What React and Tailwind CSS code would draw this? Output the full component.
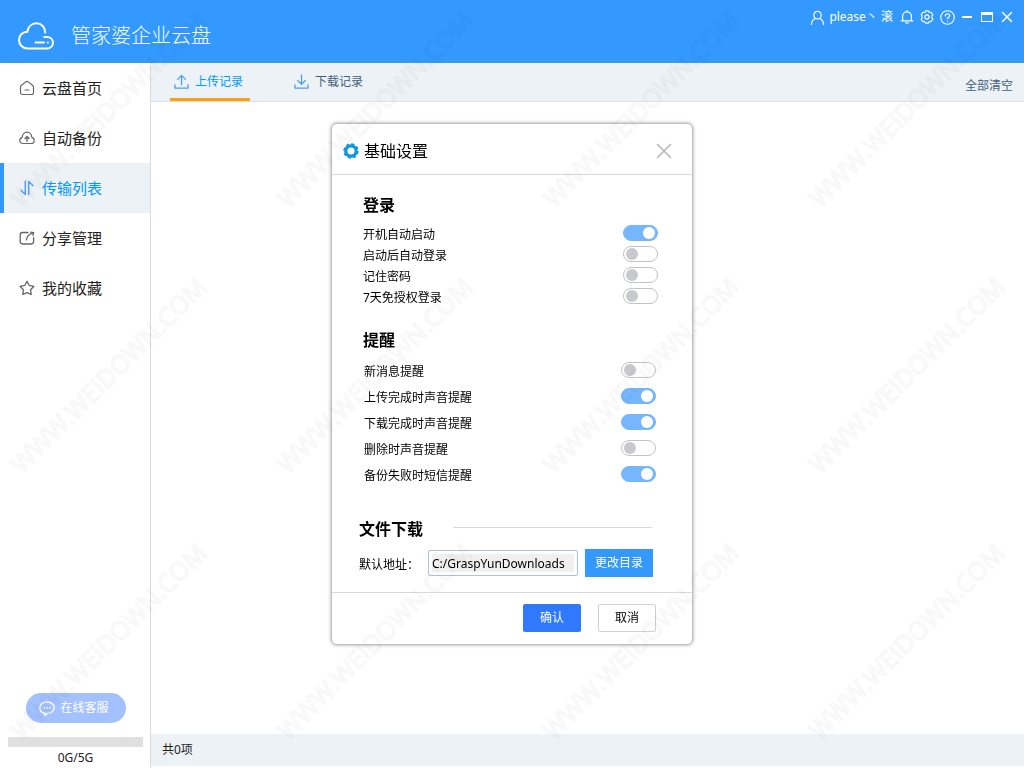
import { useState } from 'react';
import clsx from 'clsx';

const NAV = [
  { key: 'home', label: '云盘首页', icon: HomeIcon },
  { key: 'backup', label: '自动备份', icon: BackupIcon },
  { key: 'transfer', label: '传输列表', icon: TransferIcon },
  { key: 'share', label: '分享管理', icon: ShareIcon },
  { key: 'favorite', label: '我的收藏', icon: StarIcon },
];

const LOGIN_OPTIONS = [
  { key: 'boot', label: '开机自动启动', on: true },
  { key: 'autoLogin', label: '启动后自动登录', on: false },
  { key: 'remember', label: '记住密码', on: false },
  { key: 'sevenDays', label: '7天免授权登录', on: false },
];

const NOTICE_OPTIONS = [
  { key: 'message', label: '新消息提醒', on: false },
  { key: 'upload', label: '上传完成时声音提醒', on: true },
  { key: 'download', label: '下载完成时声音提醒', on: true },
  { key: 'remove', label: '删除时声音提醒', on: false },
  { key: 'backupFail', label: '备份失败时短信提醒', on: true },
];

function Icon({ className, children, box = 16 }) {
  return (
    <svg
      viewBox={`0 0 ${box} ${box}`}
      className={className}
      fill="none"
      stroke="currentColor"
      strokeLinecap="round"
      strokeLinejoin="round"
      aria-hidden="true"
    >
      {children}
    </svg>
  );
}

function HomeIcon({ className }) {
  return (
    <Icon className={className}>
      <path d="M1.5 7.2C1.5 6.4 1.9 5.8 2.5 5.3L6.8 1.9C7.5 1.4 8.5 1.4 9.2 1.9L13.5 5.3C14.1 5.8 14.5 6.4 14.5 7.2V12.4C14.5 13.6 13.6 14.5 12.4 14.5H3.6C2.4 14.5 1.5 13.6 1.5 12.4Z" strokeWidth="1.2" />
      <path d="M6 10H10" strokeWidth="1.2" />
    </Icon>
  );
}

function BackupIcon({ className }) {
  return (
    <Icon className={className}>
      <path d="M4 13.5C2.2 13.5 .8 12.1 .8 10.4C.8 8.9 1.8 7.7 3.2 7.3C3.4 4.6 5.4 2.2 8 2.2C10.6 2.2 12.6 4.6 12.8 7.3C14.2 7.7 15.2 8.9 15.2 10.4C15.2 12.1 13.8 13.5 12 13.5Z" strokeWidth="1.2" />
      <path d="M8 11.2V7M6 8.4L8 6.4L10 8.4" strokeWidth="1.4" />
    </Icon>
  );
}

function TransferIcon({ className }) {
  return (
    <Icon className={className}>
      <path d="M6.3 1.5V14.5L2 10.2M9.7 14.5V1.5L14 5.8" strokeWidth="1.5" />
    </Icon>
  );
}

function ShareIcon({ className }) {
  return (
    <Icon className={className}>
      <path d="M9 2.5H3.6C2.2 2.5 1.2 3.5 1.2 4.9V11.6C1.2 13 2.2 14 3.6 14H12.2C13.6 14 14.6 13 14.6 11.6V7.5" strokeWidth="1.3" />
      <path d="M7.4 9.8C7.8 6.8 10 4.2 14 2.9M11.6 2.2L14.7 2.7L13.9 5.4" strokeWidth="1.3" />
    </Icon>
  );
}

function StarIcon({ className }) {
  return (
    <Icon className={className}>
      <path d="M8 1.3L10.1 5.3L14.9 6.3L11.6 9.7L12.2 14.5L8 12.7L3.8 14.5L4.4 9.7L1.1 6.3L5.9 5.3Z" strokeWidth="1.3" />
    </Icon>
  );
}

function CloudLogo() {
  return (
    <svg viewBox="0 0 36 28" className="h-7 w-9" fill="none" stroke="currentColor" strokeWidth="2" strokeLinecap="round" aria-hidden="true">
      <path d="M27.2 10.4C27.2 5.2 23.4 1.3 18.4 1.3C13.6 1.3 10 4.8 9.3 9.7C4.8 9.7 1 13.3 1 18C1 22.8 4.7 26.5 9.4 26.5H29C32.4 26.5 35 24 35 20.8C35 17.4 32.3 15 28.9 15H26.2" />
      <path d="M17.5 20.5H26M29.8 20.5H29.9" />
    </svg>
  );
}

function Toggle({ id, checked, onChange }) {
  return (
    <input
      id={id}
      type="checkbox"
      role="switch"
      checked={checked}
      onChange={onChange}
      className="flex h-4 w-[35px] shrink-0 cursor-pointer appearance-none items-center rounded-full border border-[#c2c3c6] bg-white px-0.5 before:block before:size-3 before:rounded-full before:bg-[#c8c9cc] checked:justify-end checked:border-[#75b6fd] checked:bg-[#75b6fd] checked:before:bg-white"
    />
  );
}

function OptionRow({ option, rowClass, onToggle }) {
  return (
    <div className={clsx('flex items-center justify-between', rowClass)}>
      <label htmlFor={option.key} className="pt-1 text-xs">
        {option.label}
      </label>
      <Toggle id={option.key} checked={option.on} onChange={() => onToggle(option.key)} />
    </div>
  );
}

function flip(key) {
  return (list) => list.map((o) => (o.key === key ? { ...o, on: !o.on } : o));
}

function SettingsDialog() {
  const [login, setLogin] = useState(LOGIN_OPTIONS);
  const [notice, setNotice] = useState(NOTICE_OPTIONS);
  const [path, setPath] = useState('C:/GraspYunDownloads');

  return (
    <div
      role="dialog"
      aria-label="基础设置"
      className="w-[362px] rounded-md border border-[#c0c0c0] bg-white text-black shadow-[0_0_3px_1px_rgba(0,0,0,0.22)]"
    >
      <div className="flex h-[51px] items-center border-b border-[#d9d9d9] pt-1 pr-5 pl-[11px]">
        <svg viewBox="0 0 16 16" className="size-4 text-[#1296db]" fill="none" stroke="currentColor" aria-hidden="true">
          <circle cx="8" cy="8" r="5.2" strokeWidth="3.2" />
          <circle cx="8" cy="8" r="7" strokeWidth="1.4" strokeDasharray="3.3 2.198" />
        </svg>
        <h2 className="ml-[5px] flex-1 text-base">基础设置</h2>
        <button type="button" aria-label="关闭" className="text-[#b5b5b5]">
          <Icon className="size-4">
            <path d="M1.5 1.5L14.5 14.5M14.5 1.5L1.5 14.5" strokeWidth="1.5" />
          </Icon>
        </button>
      </div>

      <div className="pt-[18px] pb-[15px] pl-[31px]">
        <h3 className="text-base leading-6 font-bold">登录</h3>
        <div className="mt-[5px] pr-[34px]">
          {login.map((o) => (
            <OptionRow key={o.key} option={o} rowClass="h-[21px]" onToggle={(k) => setLogin(flip(k))} />
          ))}
        </div>

        <h3 className="mt-[22px] text-base leading-6 font-bold">提醒</h3>
        <div className="mt-[5px] pr-9 pl-px">
          {notice.map((o) => (
            <OptionRow key={o.key} option={o} rowClass="h-[26px]" onToggle={(k) => setNotice(flip(k))} />
          ))}
        </div>

        <div className="-ml-1 mt-[30px] flex items-center gap-[30px] pr-10">
          <h3 className="text-base leading-6 font-bold">文件下载</h3>
          <hr className="mb-1 flex-1 border-[#d9d9d9]" />
        </div>
        <div className="-ml-1 mt-2 flex h-7 items-center pr-[39px]">
          <label htmlFor="path" className="w-[69px] pt-1 text-xs">
            默认地址：
          </label>
          <div className="mr-[7px] min-w-0 flex-1 rounded-xs border border-[#a9c3d6] p-[3px]">
            <input
              id="path"
              value={path}
              onChange={(e) => setPath(e.target.value)}
              className="block h-[18px] w-full bg-[#f0f0f0] text-xs outline-none"
            />
          </div>
          <button type="button" className="h-7 w-[68px] bg-[#3399ff] text-xs text-white">
            更改目录
          </button>
        </div>
      </div>

      <div className="flex justify-end gap-[17px] border-t border-[#d9d9d9] pt-[11px] pr-9 pb-3">
        <button type="button" className="h-7 w-[58px] rounded-xs bg-[#3079ff] text-xs text-white">
          确认
        </button>
        <button type="button" className="h-7 w-[58px] rounded-xs border border-[#d0d0d0] bg-white text-xs">
          取消
        </button>
      </div>
    </div>
  );
}

function TitleBar() {
  return (
    <header className="flex h-[63px] items-start justify-between bg-[#3399ff] text-white">
      <div className="flex items-center gap-[17px] self-center pt-2 pl-[18px]">
        <CloudLogo />
        <h1 className="text-xl font-light">管家婆企业云盘</h1>
      </div>
      <div className="flex h-[34px] items-center pr-[7px]">
        <button type="button" className="mr-1 flex items-center gap-1 text-xs">
          <Icon className="size-[15px]">
            <circle cx="8" cy="5.5" r="4" strokeWidth="1.2" />
            <path d="M1.5 15.5C1.8 12 3.6 9.8 6 9.1M14.5 15.5C14.2 12 12.4 9.8 10 9.1" strokeWidth="1.2" />
          </Icon>
          please丶 滚
        </button>
        <button type="button" aria-label="消息" className="flex w-5 justify-center">
          <Icon className="size-3.5">
            <path d="M1.5 12.5H14.5M3 12.3V7C3 4.2 5.2 2.2 8 2.2S13 4.2 13 7V12.3M8 .8V2M6.5 14.8H9.5" strokeWidth="1.4" />
          </Icon>
        </button>
        <button type="button" aria-label="设置" className="flex w-5 justify-center">
          <Icon className="size-3.5">
            <path d="M6.3 1H9.7L10.5 2.9L12.6 2.6L14.6 5.3L13.7 7V9L14.6 10.7L12.6 13.4L10.5 13.1L9.7 15H6.3L5.5 13.1L3.4 13.4L1.4 10.7L2.3 9V7L1.4 5.3L3.4 2.6L5.5 2.9Z" strokeWidth="1.3" />
            <circle cx="8" cy="8" r="2.4" strokeWidth="1.3" />
          </Icon>
        </button>
        <button type="button" aria-label="帮助" className="flex w-5 justify-center">
          <Icon className="size-[15px]">
            <circle cx="8" cy="8" r="7.2" strokeWidth="1.2" />
            <path d="M5.7 6.3C5.7 4.9 6.7 4 8 4S10.3 4.9 10.3 6.1C10.3 7.7 8 7.9 8 9.6M8 12V12.1" strokeWidth="1.3" />
          </Icon>
        </button>
        <button type="button" aria-label="最小化" className="flex w-5 justify-center">
          <span className="h-0.5 w-2.5 bg-white" />
        </button>
        <button type="button" aria-label="最大化" className="flex w-5 justify-center">
          <span className="h-2.5 w-3 border border-t-[3px] border-white" />
        </button>
        <button type="button" aria-label="关闭窗口" className="flex w-5 justify-center">
          <Icon className="size-3">
            <path d="M2 2L14 14M14 2L2 14" strokeWidth="2" />
          </Icon>
        </button>
      </div>
    </header>
  );
}

function Sidebar() {
  return (
    <aside className="flex w-[151px] shrink-0 flex-col border-r border-[#d9dadc] bg-white">
      <nav>
        {NAV.map(({ key, label, icon: NavIcon }) => (
          <a
            key={key}
            href={`#${key}`}
            className={clsx(
              'flex h-[50px] items-center gap-[7px] border-l-4 pl-[15px] text-[15px]',
              key === 'transfer'
                ? 'border-[#3399ff] bg-[#edf2f6] text-[#0099ff]'
                : 'border-transparent text-[#222222]'
            )}
          >
            <NavIcon className={clsx('size-4', key === 'transfer' ? 'text-[#5a9ff0]' : 'text-[#666666]')} />
            {label}
          </a>
        ))}
      </nav>
      <div className="mt-auto flex flex-col items-center pr-[7px] pl-2">
        <button
          type="button"
          className="flex h-[30px] w-[100px] items-center gap-1.5 rounded-full bg-[#a3c1ff] pl-[13px] text-xs text-white"
        >
          <Icon className="size-4">
            <path d="M6 13.2C3 12.7 .8 10.5 .8 7.7C.8 4.5 4 1.9 8 1.9S15.2 4.5 15.2 7.7S12 13.3 8.3 13.4L5.8 15.4Z" strokeWidth="1.3" />
            <path d="M5.3 7.8H5.4M8 7.8H8.1M10.7 7.8H10.8" strokeWidth="1.7" />
          </Icon>
          在线客服
        </button>
        <div className="mt-3.5 h-2.5 w-full bg-[#e0e0e0]" />
        <div className="pt-0.5 pb-px text-xs leading-[18px] text-[#222222]">0G/5G</div>
      </div>
    </aside>
  );
}

function TabBar() {
  return (
    <div className="flex h-[39px] items-stretch justify-between border-b border-[#dfe2e5] bg-[#edf2f6] pr-[11px] pl-[19px] text-xs">
      <div className="flex gap-10">
        <button type="button" className="flex w-20 items-center gap-1.5 border-b-[3px] border-[#ff9f0f] pt-0.5 pl-1 text-[#0099ff]">
          <Icon className="size-[15px] text-[#4a9ff5]">
            <path d="M8 11.5V1.5M3.8 5.7L8 1.5L12.2 5.7M1 11.5V15H15V11.5" strokeWidth="1.4" />
          </Icon>
          上传记录
        </button>
        <button type="button" className="flex w-20 items-center gap-1.5 border-b-[3px] border-transparent pt-0.5 pl-1 text-[#3f5f7d]">
          <Icon className="size-[15px] text-[#4a9ff5]">
            <path d="M8 1V11M3.8 6.8L8 11L12.2 6.8M1 11.5V15H15V11.5" strokeWidth="1.4" />
          </Icon>
          下载记录
        </button>
      </div>
      <button type="button" className="pt-2 text-[#3f5f7d]">
        全部清空
      </button>
    </div>
  );
}

function Watermark() {
  return (
    <svg className="pointer-events-none fixed inset-0 size-full" aria-hidden="true">
      <defs>
        <pattern id="mark" width="266" height="266" patternUnits="userSpaceOnUse">
          <text
            transform="translate(22 209) rotate(-45)"
            fontSize="25"
            fontFamily="Open Sans"
            fill="none"
            stroke="#000000"
            strokeOpacity="0.03"
            strokeWidth="1.5"
          >
            WWW.WEIDOWN.COM
          </text>
        </pattern>
      </defs>
      <rect width="100%" height="100%" fill="url(#mark)" />
    </svg>
  );
}

export default function App() {
  return (
    <div className="flex min-h-screen flex-col bg-white font-['Noto_Sans','Noto_Sans_CJK_SC',sans-serif]">
      <TitleBar />
      <div className="flex flex-1">
        <Sidebar />
        <main className="flex min-w-0 flex-1 flex-col">
          <TabBar />
          <div className="flex-1" />
          <footer className="mb-0.5 flex h-8 items-center bg-[#edf2f6] pl-[11px] text-xs text-[#222222]">共0项</footer>
        </main>
      </div>
      <div className="fixed inset-0 flex items-center justify-center">
        <SettingsDialog />
      </div>
      <Watermark />
    </div>
  );
}
